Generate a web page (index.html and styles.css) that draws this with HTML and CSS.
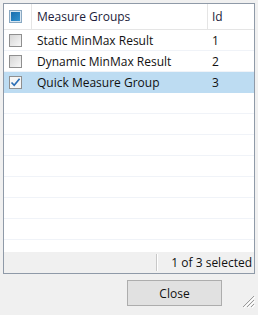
FILE: index.html
```html
<!DOCTYPE html>
<html lang="en">
<head>
    <meta charset="UTF-8">
    <title>Measure Groups</title>
    <link rel="stylesheet" href="styles.css">
</head>
<body>
    <div class="dialog">
        <div class="list">
            <div class="list-header">
                <div class="col col-check"><span class="check check-all"></span></div>
                <div class="col col-name">Measure Groups</div>
                <div class="col col-id">Id</div>
            </div>
            <div class="list-body">
                <div class="row">
                    <div class="col col-check"><span class="check"></span></div>
                    <div class="col col-name">Static MinMax Result</div>
                    <div class="col col-id">1</div>
                </div>
                <div class="row">
                    <div class="col col-check"><span class="check"></span></div>
                    <div class="col col-name">Dynamic MinMax Result</div>
                    <div class="col col-id">2</div>
                </div>
                <div class="row selected">
                    <div class="col col-check">
                        <span class="check checked">
                            <svg width="11" height="11" viewBox="0 0 11 11">
                                <path d="M1.5 5.5 L4.2 8.3 L9.6 1.8" fill="none" stroke="#2a6db5" stroke-width="1.7"/>
                            </svg>
                        </span>
                    </div>
                    <div class="col col-name">Quick Measure Group</div>
                    <div class="col col-id">3</div>
                </div>
                <div class="row empty"></div>
                <div class="row empty"></div>
                <div class="row empty"></div>
                <div class="row empty"></div>
                <div class="row empty"></div>
                <div class="row empty"></div>
                <div class="row empty"></div>
                <div class="row empty"></div>
            </div>
            <div class="status-bar">
                <div class="status-spacer"></div>
                <div class="status-text">1 of 3 selected</div>
            </div>
        </div>
        <div class="footer">
            <button class="btn-close">Close</button>
            <svg class="grip" width="14" height="14" viewBox="0 0 14 14">
                <path d="M13 2 L2 13 M13 6 L6 13 M13 10 L10 13" stroke="#9a9a9a" stroke-width="1"/>
                <path d="M14 3 L3 14 M14 7 L7 14 M14 11 L11 14" stroke="#ffffff" stroke-width="1"/>
            </svg>
        </div>
    </div>
</body>
</html>
```

FILE: styles.css
```css
* {
    margin: 0;
    padding: 0;
    box-sizing: border-box;
}

body {
    background-color: #f0f0f0;
    font-family: 'Open Sans', 'Noto Sans', sans-serif;
    font-size: 12px;
    color: #111111;
}

.dialog {
    width: 258px;
    height: 315px;
    display: flex;
    flex-direction: column;
}

.list {
    margin: 3px 3px 0 3px;
    height: 271px;
    border: 1px solid #8f9aa8;
    background-color: #ffffff;
    display: flex;
    flex-direction: column;
}

.list-header {
    height: 26px;
    display: flex;
    border-bottom: 1px solid #e5e5e5;
    color: #1c1c3a;
}

.list-header .col {
    border-right: 1px solid #e5e5e5;
}

.list-header .col-id {
    border-right: none;
}

.col {
    display: flex;
    align-items: center;
    white-space: nowrap;
}

.col-check {
    width: 28px;
    padding-left: 5px;
}

.col-name {
    width: 176px;
    padding-left: 5px;
}

.col-id {
    flex: 1;
    padding-left: 4px;
}

.list-body {
    flex: 1;
    overflow: hidden;
}

.row {
    height: 21px;
    display: flex;
    border-bottom: 1px solid #f0f3f8;
}

.row .col-check,
.row .col-name {
    border-right: none;
}

.row.selected {
    background-color: #bddcf2;
    border-bottom-color: #bddcf2;
}

.check {
    width: 13px;
    height: 13px;
    border: 1px solid #8f8f8f;
    background: linear-gradient(135deg, #d6d6d6, #f7f7f7);
    display: flex;
    align-items: center;
    justify-content: center;
}

.check-all {
    border-color: #8aa9c2;
    background: linear-gradient(135deg, #1769a8, #3596d3);
    box-shadow: inset 0 0 0 1px #d9e6f1;
}

.check.checked {
    background: #f6f6f6;
    border-color: #8f8f8f;
}

.status-bar {
    height: 21px;
    display: flex;
    background-color: #f0f0f0;
}

.status-spacer {
    width: 153px;
    border-right: 1px solid #c8c8c8;
    margin: 2px 0;
    box-shadow: 1px 0 0 #ffffff;
}

.status-text {
    flex: 1;
    display: flex;
    align-items: center;
    justify-content: flex-end;
    padding-right: 2px;
}

.footer {
    flex: 1;
    display: flex;
    justify-content: flex-end;
    padding: 6px 3px 0 0;
    gap: 19px;
}

.btn-close {
    width: 95px;
    height: 26px;
    font-family: 'Open Sans', 'Noto Sans', sans-serif;
    font-size: 12px;
    color: #111111;
    background-color: #e1e1e1;
    border: 1px solid #adadad;
}

.grip {
    align-self: flex-end;
    margin-bottom: 7px;
}
```
